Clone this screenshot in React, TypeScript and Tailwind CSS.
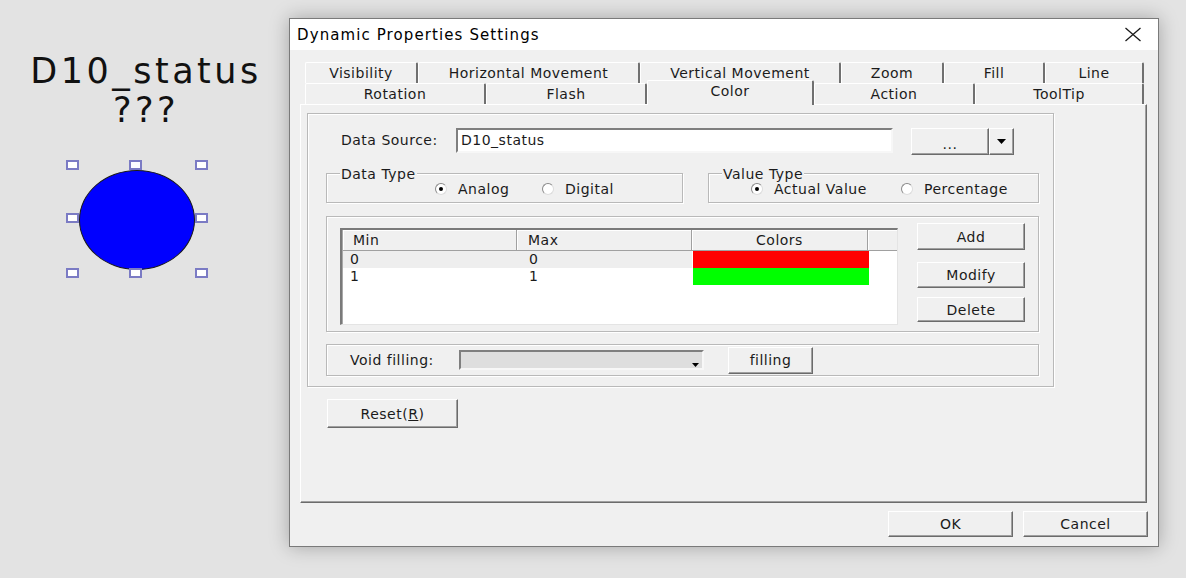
import type { ReactNode } from 'react';

const raised =
  'border border-t-white border-l-white border-r-[#6b6b6b] border-b-[#6b6b6b] bg-[#f0f0f0] shadow-[inset_-1px_-1px_0_#a0a0a0]';
const sunken =
  'border-2 border-t-[#7f7f7f] border-l-[#7f7f7f] border-r-[#f7f7f7] border-b-[#f7f7f7]';
const etched = 'border border-[#b9b9b9] shadow-[inset_1px_1px_0_#ffffff,1px_1px_0_#ffffff]';

const TOP_TABS = [
  { label: 'Visibility', w: 'w-[113px]' },
  { label: 'Horizontal Movement', w: 'w-[222px]' },
  { label: 'Vertical Movement', w: 'w-[201px]' },
  { label: 'Zoom', w: 'w-[103px]' },
  { label: 'Fill', w: 'w-[101px]' },
  { label: 'Line', w: 'w-[99px]' },
];

const BOTTOM_TABS = [
  { label: 'Rotation', w: 'w-[181px]' },
  { label: 'Flash', w: 'w-[161px]' },
  { label: 'Color', w: 'w-[167px]', active: true },
  { label: 'Action', w: 'w-[161px]' },
  { label: 'ToolTip', w: 'w-[169px]' },
];

const tabBase =
  'flex shrink-0 justify-center rounded-t-[2px] border-t border-l border-t-white border-l-white border-r-2 border-r-[#707070] bg-[#f0f0f0]';

function Tab({ label, w, active }: { label: string; w: string; active?: boolean }) {
  return (
    <div
      className={`${tabBase} ${w} ${
        active ? 'relative z-10 -mb-px h-[25px] items-start pt-[1px]' : 'h-[21px] items-center'
      }`}
    >
      {label}
    </div>
  );
}

function Button({ className, children }: { className: string; children: ReactNode }) {
  return (
    <button type="button" className={`flex shrink-0 items-center justify-center ${raised} ${className}`}>
      {children}
    </button>
  );
}

function Radio({ label, checked, className }: { label: string; checked?: boolean; className?: string }) {
  return (
    <div className={`flex items-center gap-[11px] ${className ?? ''}`}>
      <span className="flex h-[12px] w-[12px] items-center justify-center rounded-full border border-t-[#8a8a8a] border-l-[#8a8a8a] border-r-[#dcdcdc] border-b-[#dcdcdc] bg-white">
        {checked && <span className="h-[4px] w-[4px] rounded-full bg-black" />}
      </span>
      <span>{label}</span>
    </div>
  );
}

function Group({ label, className, children }: { label?: string; className: string; children: ReactNode }) {
  return (
    <div className={`relative ${etched} ${className}`}>
      {label && <span className="absolute -top-[9px] left-[13px] bg-[#f0f0f0] px-px">{label}</span>}
      {children}
    </div>
  );
}

function Handle({ pos }: { pos: string }) {
  return <span className={`absolute h-[10px] w-[13px] border-2 border-[#7b7bc4] bg-white ${pos}`} />;
}

export default function App() {
  return (
    <div className="flex h-[578px] w-full overflow-hidden bg-[#e3e3e3] font-['DejaVu_Sans',sans-serif] text-[#1b1b1b]">
      {/* canvas object */}
      <div className="w-[289px] shrink-0">
        <div className="pl-[3px] pt-[52px] text-center text-[35px] leading-[39px] tracking-[3.5px] text-[#111]">
          <div>D10_status</div>
          <div>???</div>
        </div>
        <div className="relative ml-[72px] mt-[35px] h-[108px] w-[129px] pl-[7px] pt-[5px]">
          <div className="h-[100px] w-[116px] rounded-[50%] border border-[#1a1a1a] bg-[#0000ff]" />
          <Handle pos="-left-[6px] -top-[5px]" />
          <Handle pos="left-[57px] -top-[5px]" />
          <Handle pos="left-[123px] -top-[5px]" />
          <Handle pos="-left-[6px] top-[48px]" />
          <Handle pos="left-[123px] top-[48px]" />
          <Handle pos="-left-[6px] top-[103px]" />
          <Handle pos="left-[57px] top-[103px]" />
          <Handle pos="left-[123px] top-[103px]" />
        </div>
      </div>

      {/* dialog */}
      <div className="mt-[18px] flex h-[529px] w-[870px] shrink-0 flex-col border border-[#7a7a7a] bg-[#f0f0f0] text-[14px] leading-[18px] tracking-[0.5px] shadow-[0_0_18px_rgba(0,0,0,0.28)]">
        <div className="flex h-[31px] items-center justify-between bg-white pl-[7px] pr-[16px]">
          <span className="text-[15px] tracking-[1.1px] text-black">Dynamic Properties Settings</span>
          <svg width="18" height="15" viewBox="0 0 18 15" fill="none" stroke="#1a1a1a" strokeWidth="1.3">
            <path d="M1.5 1L16.5 14M16.5 1L1.5 14" />
          </svg>
        </div>

        <div className="flex flex-1 flex-col px-[10px] pt-[12px]">
          <div className="ml-[5px]">
            <div className="flex h-[21px] items-end">
              {TOP_TABS.map((t) => (
                <Tab key={t.label} label={t.label} w={t.w} />
              ))}
            </div>
            <div className="flex h-[21px] items-end">
              {BOTTOM_TABS.map((t) => (
                <Tab key={t.label} label={t.label} w={t.w} active={t.active} />
              ))}
            </div>
          </div>

          <div className="flex h-[399px] w-[847px] flex-col border-t border-l border-r border-b border-t-white border-l-white border-r-[#6b6b6b] border-b-[#6b6b6b] shadow-[inset_-1px_-1px_0_#a0a0a0]">
            <div className={`ml-[6px] mt-[8px] flex h-[274px] w-[747px] flex-col pl-[18px] pr-[14px] pt-[14px] ${etched}`}>
              {/* data source */}
              <div className="flex h-[27px] items-start">
                <span className="w-[130px] pl-[15px] leading-[25px]">Data Source:</span>
                <div className={`h-[25px] w-[437px] bg-white pl-[3px] leading-[21px] ${sunken}`}>D10_status</div>
                <div className="ml-[18px] flex">
                  <Button className="h-[27px] w-[78px] pt-[4px]">...</Button>
                  <Button className="h-[27px] w-[25px]">
                    <svg width="9" height="5" viewBox="0 0 9 5">
                      <path d="M0 0H9L4.5 5Z" fill="#000" />
                    </svg>
                  </Button>
                </div>
              </div>

              {/* types */}
              <div className="mt-[18px] flex gap-[25px]">
                <Group label="Data Type" className="h-[30px] w-[357px]">
                  <div className="flex h-full items-center pl-[108px] pt-[2px]">
                    <Radio label="Analog" checked className="w-[107px]" />
                    <Radio label="Digital" />
                  </div>
                </Group>
                <Group label="Value Type" className="h-[30px] w-[331px]">
                  <div className="flex h-full items-center pl-[42px] pt-[2px]">
                    <Radio label="Actual Value" checked className="w-[150px]" />
                    <Radio label="Percentage" />
                  </div>
                </Group>
              </div>

              {/* ranges */}
              <Group className="mt-[13px] flex h-[116px] items-start">
                <div className="ml-[13px] mt-[11px] flex h-[97px] w-[558px] flex-col border-t-2 border-l-2 border-r border-b border-t-[#7a7a7a] border-l-[#7a7a7a] border-r-[#e4e4e4] border-b-[#e4e4e4] bg-white shadow-[inset_1px_1px_0_#a8a8a8]">
                  <div className="ml-px flex h-[21px] bg-[#f0f0f0]">
                    <div className="w-[174px] border-r border-b border-r-[#a0a0a0] border-b-[#a0a0a0] pl-[10px] leading-[20px] shadow-[inset_1px_1px_0_#fff]">Min</div>
                    <div className="w-[175px] border-r border-b border-r-[#a0a0a0] border-b-[#a0a0a0] pl-[11px] leading-[20px] shadow-[inset_1px_1px_0_#fff]">Max</div>
                    <div className="w-[176px] border-r border-b border-r-[#a0a0a0] border-b-[#a0a0a0] text-center leading-[20px] shadow-[inset_1px_1px_0_#fff]">Colors</div>
                    <div className="flex-1 border-b border-b-[#a0a0a0] shadow-[inset_1px_1px_0_#fff]" />
                  </div>
                  <div className="ml-px flex h-[17px] leading-[17px]">
                    <div className="w-[174px] bg-[#eeeeee] pl-[7px]">0</div>
                    <div className="w-[175px] bg-[#eeeeee] pl-[12px]">0</div>
                    <div className="ml-px w-[176px] bg-[#ff0000]" />
                  </div>
                  <div className="ml-px flex h-[17px] leading-[17px]">
                    <div className="w-[174px] pl-[7px]">1</div>
                    <div className="w-[175px] pl-[12px]">1</div>
                    <div className="ml-px w-[176px] bg-[#00ff00]" />
                  </div>
                </div>
                <div className="ml-[19px] mt-[6px] flex flex-col">
                  <Button className="h-[27px] w-[108px]">Add</Button>
                  <Button className="mt-[12px] h-[26px] w-[108px]">Modify</Button>
                  <Button className="mt-[9px] h-[25px] w-[108px]">Delete</Button>
                </div>
              </Group>

              {/* void filling */}
              <Group className="mt-[12px] flex h-[32px] items-center">
                <span className="w-[132px] pl-[23px]">Void filling:</span>
                <div className={`relative h-[20px] w-[245px] bg-[#dedede] ${sunken}`}>
                  <svg className="absolute bottom-[1px] right-[3px]" width="7" height="4" viewBox="0 0 7 4">
                    <path d="M0 0H7L3.5 4Z" fill="#000" />
                  </svg>
                </div>
                <Button className="ml-[24px] h-[27px] w-[85px]">filling</Button>
              </Group>
            </div>

            <Button className="ml-[26px] mt-[12px] h-[29px] w-[131px]">
              Reset(<span className="underline">R</span>)
            </Button>
          </div>

          <div className="mt-[8px] flex justify-end gap-[10px]">
            <Button className="h-[26px] w-[125px]">OK</Button>
            <Button className="h-[26px] w-[125px]">Cancel</Button>
          </div>
        </div>
      </div>
    </div>
  );
}
